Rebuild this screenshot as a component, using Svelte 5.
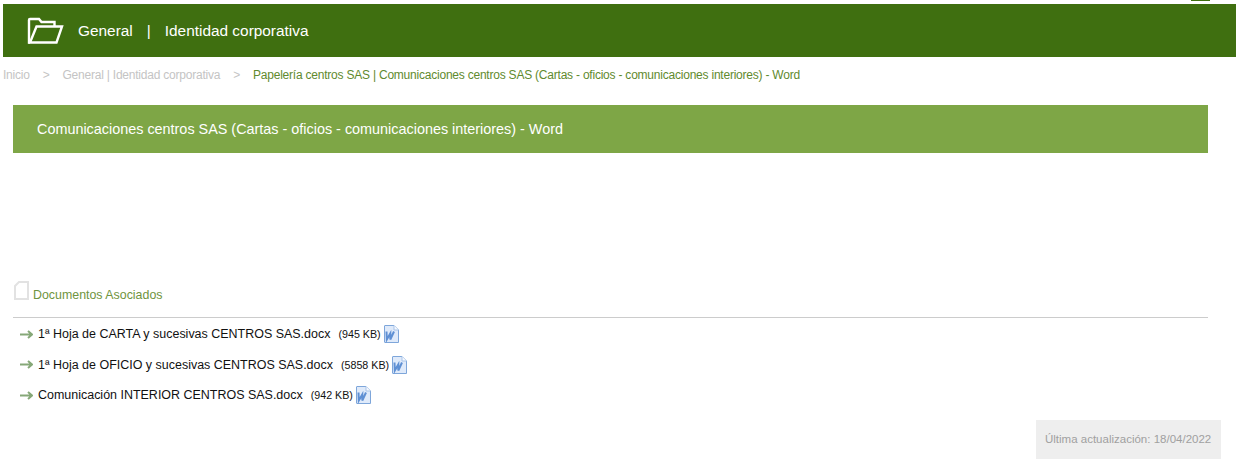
<script>
    const crumbs = ['Inicio', 'General | Identidad corporativa'];
    const docs = [
        { name: '1ª Hoja de CARTA y sucesivas CENTROS SAS.docx', size: '945 KB' },
        { name: '1ª Hoja de OFICIO y sucesivas CENTROS SAS.docx', size: '5858 KB' },
        { name: 'Comunicación INTERIOR CENTROS SAS.docx', size: '942 KB' }
    ];
</script>

<div class="page">
    <div class="top-tab"></div>
    <header class="site-header">
        <svg class="folder" width="37" height="27" viewBox="0 0 37 27" fill="none" stroke="#fff" stroke-width="2.400">
            <path d="M3 25.500H2V3C2 2.300 2.300 2 3 2H12L14.500 5H27.500V9" />
            <path d="M9.500 9.500H35L29.500 25.500H3Z" />
        </svg>
        <span>General</span>
        <span class="sep">|</span>
        <span>Identidad corporativa</span>
    </header>

    <nav class="breadcrumb">
        {#each crumbs as crumb}
            <span class="crumb">{crumb}</span>
            <span class="arrow">&gt;</span>
        {/each}
        <span class="current">Papelería centros SAS | Comunicaciones centros SAS (Cartas - oficios - comunicaciones interiores) - Word</span>
    </nav>

    <main class="content">
        <h1 class="title">Comunicaciones centros SAS (Cartas - oficios - comunicaciones interiores) - Word</h1>

        <div class="docs-head">
            <svg width="15" height="19" viewBox="0 0 15 19" fill="#fff" stroke="#e2e2e2" stroke-width="2">
                <path d="M1 18V5L5 1H14V18Z" />
            </svg>
            <h2>Documentos Asociados</h2>
        </div>

        <ul class="docs">
            {#each docs as doc}
                <li>
                    <svg class="arrow-icon" width="13" height="9" viewBox="0 0 13 9" fill="none" stroke="#86a878" stroke-width="2">
                        <path d="M0 4.500H11.500M8 1L12 4.500L8 8" />
                    </svg>
                    <span class="doc-name">{doc.name}</span>
                    <span class="doc-size">({doc.size})</span>
                    <svg class="word" width="15" height="18" viewBox="0 0 15 18">
                        <path d="M1 0.500H10L14.500 5V17.500H1Q0.500 17.500 0.500 17V1Q0.500 0.500 1 0.500Z" fill="#dfeafa" stroke="#7ea6da" />
                        <path d="M10 0.500V5H14.500" fill="#f6f9fe" stroke="#a9c4e8" />
                        <path d="M2.500 6.500L2.800 14.500L6.300 8.500L6.300 14.500L10 6.500" fill="none" stroke="#5f90d4" stroke-width="2" />
                    </svg>
                </li>
            {/each}
        </ul>

        <div class="updated-row">
            <div class="updated">Última actualización: 18/04/2022</div>
        </div>
    </main>
</div>

<style>
    :global(body) {
        background: #fff;
        font-family: "Liberation Sans", Arial, sans-serif;
    }

    .page {
        position: relative;
        height: 466px;
        overflow: hidden;
        padding-top: 4px;
        box-sizing: border-box;
    }

    .top-tab {
        position: absolute;
        top: 0;
        left: 1191px;
        width: 19px;
        height: 1px;
        background: #3f6f10;
    }

    .site-header {
        display: flex;
        align-items: center;
        height: 53px;
        margin-left: 3px;
        padding-left: 24px;
        background: #3f6f10;
        color: #fff;
        font-size: 15.400px;
    }

    .folder {
        margin-right: 14px;
    }

    .sep {
        margin: 0 14px;
    }

    .breadcrumb {
        display: flex;
        align-items: center;
        height: 18px;
        margin-top: 9px;
        padding-left: 3px;
        font-size: 12px;
        letter-spacing: -0.220px;
        color: #c4c4c4;
    }

    .arrow {
        margin: 0 13px;
    }

    .current {
        color: #5f8a2e;
    }

    .content {
        padding: 0 28px 0 13px;
    }

    .title {
        display: flex;
        align-items: center;
        height: 48px;
        margin: 21px 0 0;
        padding-left: 24px;
        background: #7ea646;
        color: #fff;
        font-size: 14.400px;
        font-weight: normal;
    }

    .docs-head {
        display: flex;
        align-items: flex-end;
        gap: 4px;
        height: 24px;
        margin-top: 125px;
        border-bottom: 1px solid #ccc;
        padding-bottom: 15px;
    }

    .docs-head svg {
        margin-left: 1px;
        margin-bottom: 2px;
    }

    .docs-head h2 {
        margin: 0;
        color: #6f9440;
        font-size: 12.400px;
        font-weight: normal;
    }

    .docs {
        margin: 0;
        padding: 1px 0 0 7px;
        list-style: none;
    }

    .docs li {
        display: flex;
        align-items: center;
        height: 30.500px;
        font-size: 12.470px;
        color: #111;
    }

    .arrow-icon {
        margin-right: 5px;
    }

    .doc-size {
        margin-left: 8px;
        margin-right: 3px;
        font-size: 10.700px;
    }

    .updated-row {
        display: flex;
        justify-content: flex-end;
        margin-top: 9px;
        margin-right: -13px;
    }

    .updated {
        display: flex;
        align-items: center;
        box-sizing: border-box;
        width: 185px;
        height: 39px;
        padding-left: 9px;
        background: #eee;
        color: #a0a0a0;
        font-size: 11.500px;
    }
</style>
